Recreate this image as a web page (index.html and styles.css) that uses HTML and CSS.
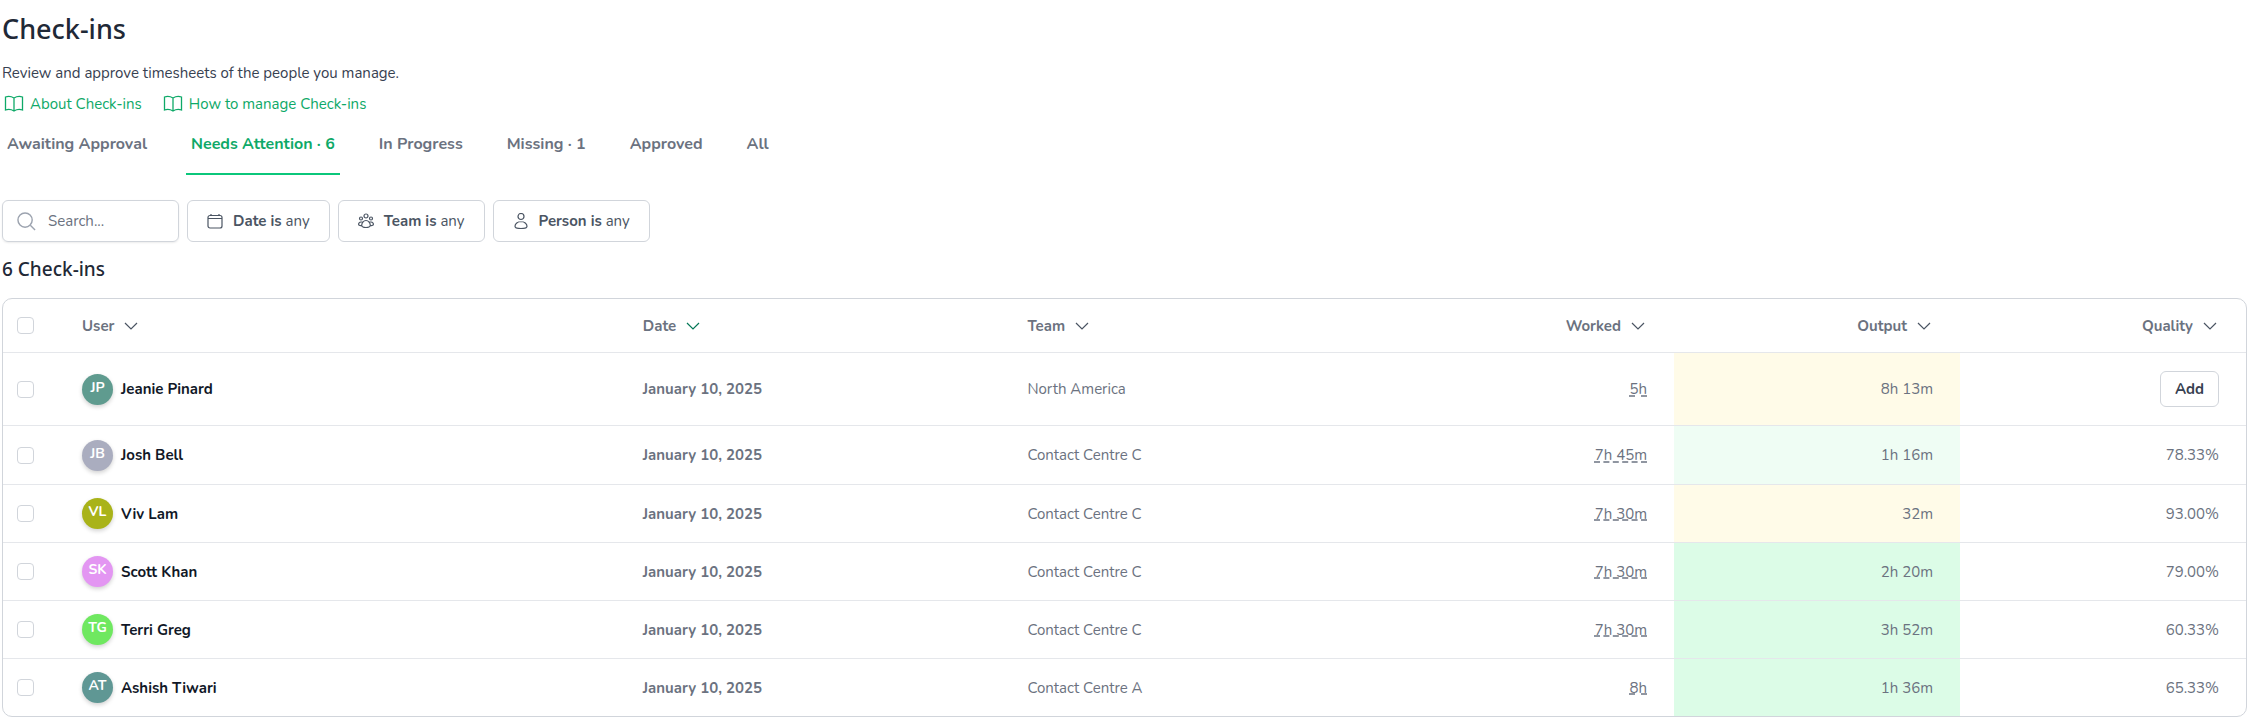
FILE: index.html
```
<!DOCTYPE html>
<html lang="en">
<head>
    <meta charset="UTF-8">
    <meta name="viewport" content="width=device-width, initial-scale=1.0">
    <title>Check-ins</title>
    <link rel="stylesheet" href="styles.css">
</head>
<body>
    <svg class="sprite" aria-hidden="true">
        <symbol id="icon-book" viewBox="0 0 20 20">
            <path d="M10 4v13M10 4C7.500 2.500 4 2.200 1.500 3v13c2.500-.8 6-.5 8.500 1 2.500-1.500 6-1.800 8.500-1V3C16 2.200 12.500 2.500 10 4z"/>
        </symbol>
        <symbol id="icon-search" viewBox="0 0 20 20">
            <circle cx="8.500" cy="8.500" r="7.500"/><path d="M14 14l5 5"/>
        </symbol>
        <symbol id="icon-calendar" viewBox="0 0 16 16">
            <rect x="1" y="2.500" width="14" height="12.500" rx="2"/><path d="M1 5.500h14M4 1v1.500M12 1v1.500"/>
        </symbol>
        <symbol id="icon-team" viewBox="0 0 16 16">
            <circle cx="8" cy="3" r="2"/><circle cx="3" cy="5.500" r="1.500"/><circle cx="13" cy="5.500" r="1.500"/>
            <path d="M8 7.500c-2.600 0-4.300 2.500-4.300 4.800 0 1.500 2 2.200 4.300 2.200s4.300-.7 4.300-2.200c0-2.300-1.700-4.800-4.300-4.800zM3.300 12.500C1.500 12.700.6 12 .6 11.200c0-1 .8-2 2.400-2.200h1.500M12.700 12.500c1.800.2 2.700-.5 2.700-1.300 0-1-.8-2-2.400-2.200h-1.500"/>
        </symbol>
        <symbol id="icon-person" viewBox="0 0 16 16">
            <circle cx="8" cy="3.500" r="3"/><path d="M8 8.500c-3.300 0-6 2.300-6 4.700 0 1.600 2.700 2.300 6 2.300s6-.7 6-2.300c0-2.400-2.700-4.700-6-4.700z"/>
        </symbol>
        <symbol id="icon-chevron" viewBox="0 0 14 8">
            <path d="M1 1l6 6 6-6"/>
        </symbol>
    </svg>

    <main class="page">
        <h1>Check-ins</h1>
        <p class="intro">Review and approve timesheets of the people you manage.</p>
        <div class="help-links">
            <a href="#about"><svg class="icon-book"><use href="#icon-book"/></svg>About Check-ins</a>
            <a href="#manage"><svg class="icon-book"><use href="#icon-book"/></svg>How to manage Check-ins</a>
        </div>

        <nav class="tabs">
            <a href="#awaiting">Awaiting Approval</a>
            <a href="#attention" class="active">Needs Attention · 6</a>
            <a href="#progress">In Progress</a>
            <a href="#missing">Missing · 1</a>
            <a href="#approved">Approved</a>
            <a href="#all">All</a>
        </nav>

        <div class="filters">
            <label class="search">
                <svg class="icon-search"><use href="#icon-search"/></svg>
                <input type="text" placeholder="Search..." aria-label="Search">
            </label>
            <button class="filter"><svg class="icon-filter"><use href="#icon-calendar"/></svg><span><b>Date is</b> any</span></button>
            <button class="filter"><svg class="icon-filter"><use href="#icon-team"/></svg><span><b>Team is</b> any</span></button>
            <button class="filter"><svg class="icon-filter"><use href="#icon-person"/></svg><span><b>Person is</b> any</span></button>
        </div>

        <h2>6 Check-ins</h2>

        <div class="table-wrap">
            <table>
                <thead>
                    <tr>
                        <th class="col-check"><input type="checkbox" aria-label="Select all"></th>
                        <th class="col-user"><button class="sort">User<svg><use href="#icon-chevron"/></svg></button></th>
                        <th class="col-date"><button class="sort sorted">Date<svg><use href="#icon-chevron"/></svg></button></th>
                        <th class="col-team"><button class="sort">Team<svg><use href="#icon-chevron"/></svg></button></th>
                        <th class="col-num"><button class="sort">Worked<svg><use href="#icon-chevron"/></svg></button></th>
                        <th class="col-num"><button class="sort">Output<svg><use href="#icon-chevron"/></svg></button></th>
                        <th class="col-num"><button class="sort">Quality<svg><use href="#icon-chevron"/></svg></button></th>
                    </tr>
                </thead>
                <tbody>
                    <tr>
                        <td class="check"><input type="checkbox" aria-label="Select Jeanie Pinard"></td>
                        <td><div class="user"><span class="avatar teal">JP</span>Jeanie Pinard</div></td>
                        <td class="date">January 10, 2025</td>
                        <td>North America</td>
                        <td class="num"><span class="worked">5h</span></td>
                        <td class="num yellow">8h 13m</td>
                        <td class="num"><button class="add">Add</button></td>
                    </tr>
                    <tr>
                        <td class="check"><input type="checkbox" aria-label="Select Josh Bell"></td>
                        <td><div class="user"><span class="avatar gray">JB</span>Josh Bell</div></td>
                        <td class="date">January 10, 2025</td>
                        <td>Contact Centre C</td>
                        <td class="num"><span class="worked">7h 45m</span></td>
                        <td class="num mint">1h 16m</td>
                        <td class="num">78.33%</td>
                    </tr>
                    <tr>
                        <td class="check"><input type="checkbox" aria-label="Select Viv Lam"></td>
                        <td><div class="user"><span class="avatar olive">VL</span>Viv Lam</div></td>
                        <td class="date">January 10, 2025</td>
                        <td>Contact Centre C</td>
                        <td class="num"><span class="worked">7h 30m</span></td>
                        <td class="num yellow">32m</td>
                        <td class="num">93.00%</td>
                    </tr>
                    <tr>
                        <td class="check"><input type="checkbox" aria-label="Select Scott Khan"></td>
                        <td><div class="user"><span class="avatar pink">SK</span>Scott Khan</div></td>
                        <td class="date">January 10, 2025</td>
                        <td>Contact Centre C</td>
                        <td class="num"><span class="worked">7h 30m</span></td>
                        <td class="num green">2h 20m</td>
                        <td class="num">79.00%</td>
                    </tr>
                    <tr>
                        <td class="check"><input type="checkbox" aria-label="Select Terri Greg"></td>
                        <td><div class="user"><span class="avatar lime">TG</span>Terri Greg</div></td>
                        <td class="date">January 10, 2025</td>
                        <td>Contact Centre C</td>
                        <td class="num"><span class="worked">7h 30m</span></td>
                        <td class="num green">3h 52m</td>
                        <td class="num">60.33%</td>
                    </tr>
                    <tr>
                        <td class="check"><input type="checkbox" aria-label="Select Ashish Tiwari"></td>
                        <td><div class="user"><span class="avatar steel">AT</span>Ashish Tiwari</div></td>
                        <td class="date">January 10, 2025</td>
                        <td>Contact Centre A</td>
                        <td class="num"><span class="worked">8h</span></td>
                        <td class="num green">1h 36m</td>
                        <td class="num">65.33%</td>
                    </tr>
                </tbody>
            </table>
        </div>
    </main>
</body>
</html>
```

FILE: styles.css
```
* {
    box-sizing: border-box;
}
body {
    margin: 0;
    background-color: white;
    color: #6b7280;
    font-family: Nunito, Lato, sans-serif;
    font-size: 15px;
    line-height: 24px;
}
a {
    text-decoration: none;
}
button, input {
    font: inherit;
    color: inherit;
    margin: 0;
}
button {
    cursor: pointer;
    background: none;
    border: none;
    padding: 0;
}
svg {
    fill: none;
    stroke: currentColor;
    flex: none;
}
.sprite {
    display: none;
}
.page {
    padding: 8px 14px 8px 2px;
}
h1, h2 {
    margin: 0;
    font-family: "Noto Sans", sans-serif;
    font-weight: 500;
    color: #1f2937;
}
h1 {
    font-size: 27px;
    line-height: 42px;
}
h2 {
    font-size: 19px;
    line-height: 28px;
    margin: 13px 0 15px;
}
.intro {
    margin: 11px 0 7px;
    color: #374151;
}
.help-links {
    display: flex;
    gap: 19px;
    color: #0ea968;
}
.help-links a {
    display: flex;
    align-items: center;
    gap: 6px;
    padding-left: 2px;
    color: inherit;
}
.icon-book {
    width: 20px;
    height: 20px;
    stroke-width: 1.3;
}

/* tabs */
.tabs {
    display: flex;
    gap: 34px;
    margin-top: 16px;
}
.tabs a {
    padding: 0 5px 17px;
    color: #6b7280;
    font-size: 16px;
    font-weight: 700;
    border-bottom: 2px solid transparent;
}
.tabs a.active {
    color: #0ea968;
    border-bottom-color: #0bc77b;
}

/* filters */
.filters {
    display: flex;
    gap: 8px;
    margin-top: 25px;
}
.search, .filter {
    display: flex;
    align-items: center;
    height: 42px;
    border: 1px solid #d1d5db;
    border-radius: 6px;
}
.search {
    width: 177px;
    padding: 0 14px;
    gap: 12px;
    color: #9ca3af;
    box-shadow: 0 1px 2px rgba(0, 0, 0, 0.08);
}
.search input {
    width: 100%;
    min-width: 0;
    border: none;
    outline: none;
    padding: 0;
    background: none;
    color: #6b7280;
}
.search input::placeholder {
    color: #6b7280;
    opacity: 1;
}
.icon-search {
    width: 19px;
    height: 19px;
    stroke-width: 1.5;
}
.filter {
    gap: 10px;
    padding: 0 19px;
    color: #4b5563;
}
.icon-filter {
    width: 16px;
    height: 16px;
    stroke-width: 1.2;
}

/* table */
.table-wrap {
    border: 1px solid #d1d5db;
    border-radius: 10px;
    overflow: hidden;
}
table {
    width: 100%;
    table-layout: fixed;
    border-collapse: separate;
    border-spacing: 0;
}
th, td {
    height: 58px;
    padding: 0 27px;
    text-align: left;
    font-weight: inherit;
    border-bottom: 1px solid #e5e7eb;
}
th {
    height: 54px;
}
tbody tr:first-child td {
    height: 73px;
}
tbody tr:nth-child(2) td {
    height: 59px;
}
tbody tr:last-child td {
    height: 57px;
    border-bottom: none;
}
.col-check {
    width: 52px;
}
.col-user {
    width: 25%;
}
.col-date {
    width: 17.15%;
}
.col-num {
    width: 286px;
    text-align: right;
}
.col-check, .check {
    padding: 0 0 0 14px;
}
.sort {
    display: inline-flex;
    align-items: center;
    gap: 10px;
    font-weight: 700;
}
.sort svg {
    width: 14px;
    height: 8px;
    color: #4b5563;
    stroke-width: 1.2;
}
.sort.sorted svg {
    color: #047857;
}
.col-num .sort {
    margin-right: 2px;
}
input[type="checkbox"] {
    appearance: none;
    display: block;
    width: 17px;
    height: 17px;
    border: 1px solid #d1d5db;
    border-radius: 4px;
    background-color: white;
}
.user {
    display: flex;
    align-items: center;
    gap: 8px;
    color: #111827;
    font-weight: 700;
}
.avatar {
    width: 31px;
    height: 31px;
    border-radius: 50%;
    color: white;
    font-size: 14px;
    line-height: 27px;
    text-align: center;
    box-shadow: 0 2px 4px rgba(0, 0, 0, 0.18);
}
.avatar.teal { background-color: #5f9b8f; }
.avatar.gray { background-color: #aaadbf; }
.avatar.olive { background-color: #a9b319; }
.avatar.pink { background-color: #e396f2; }
.avatar.lime { background-color: #6fe860; }
.avatar.steel { background-color: #5f9794; }
.date {
    font-weight: 700;
}
.num {
    text-align: right;
}
.worked {
    text-decoration: underline dashed #9096a1 2px;
    text-decoration-skip-ink: none;
    text-underline-offset: 1px;
}
.yellow { background-color: #fffbe8; }
.mint { background-color: #effdf4; }
.green { background-color: #dcfce7; }
.add {
    padding: 5px 14px;
    border: 1px solid #d1d5db;
    border-radius: 6px;
    color: #374151;
    font-weight: 700;
}
```
